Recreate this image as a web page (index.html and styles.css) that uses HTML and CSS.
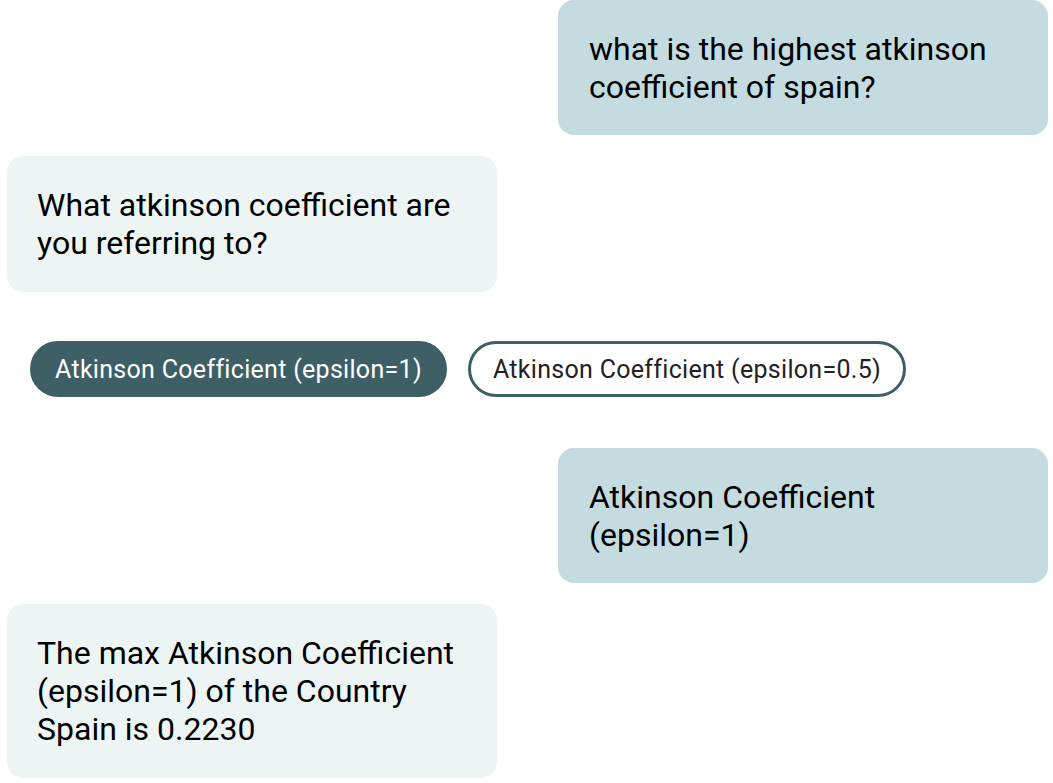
FILE: index.html
```html
<!DOCTYPE html>
<html>
<head>
<meta charset="utf-8">
<link rel="stylesheet" href="styles.css">
</head>
<body>
<div class="chat">
  <div class="bubble user">what is the highest atkinson coefficient of spain?</div>
  <div class="bubble bot">What atkinson coefficient are you referring to?</div>
  <div class="options">
    <button class="opt selected">Atkinson Coefficient (epsilon=1)</button>
    <button class="opt">Atkinson Coefficient (epsilon=0.5)</button>
  </div>
  <div class="bubble user">Atkinson Coefficient (epsilon=1)</div>
  <div class="bubble bot">The max Atkinson Coefficient (epsilon=1) of the Country Spain is 0.2230</div>
</div>
</body>
</html>
```
FILE: styles.css
```css
html, body {
  margin: 0;
  padding: 0;
  background: #ffffff;
}
body {
  font-family: Roboto, "Liberation Sans", sans-serif;
}
.chat {
  display: flex;
  flex-direction: column;
  padding: 0 5px 0 7px;
}
.bubble {
  box-sizing: border-box;
  width: 490px;
  padding: 30px 30px;
  border-radius: 16px;
  font-size: 32px;
  line-height: 38px;
  color: #000;
}
.user {
  align-self: flex-end;
  background: #c4dcdf;
  padding-left: 31px;
  padding-bottom: 29px;
}
.bot {
  align-self: flex-start;
  background: #edf5f4;
  margin-top: 21px;
}
.options {
  display: flex;
  gap: 21px;
  padding-left: 23px;
  margin: 49px 0 51px;
}
.opt {
  box-sizing: border-box;
  height: 56px;
  padding: 0 22px;
  border: 3px solid #3e5f66;
  border-radius: 28px;
  background: #fff;
  color: #222;
  font-family: Roboto, "Liberation Sans", sans-serif;
  font-size: 25px;
  letter-spacing: 0.3px;
}
.opt.selected {
  background: #3e5f66;
  color: #fff;
}
```
